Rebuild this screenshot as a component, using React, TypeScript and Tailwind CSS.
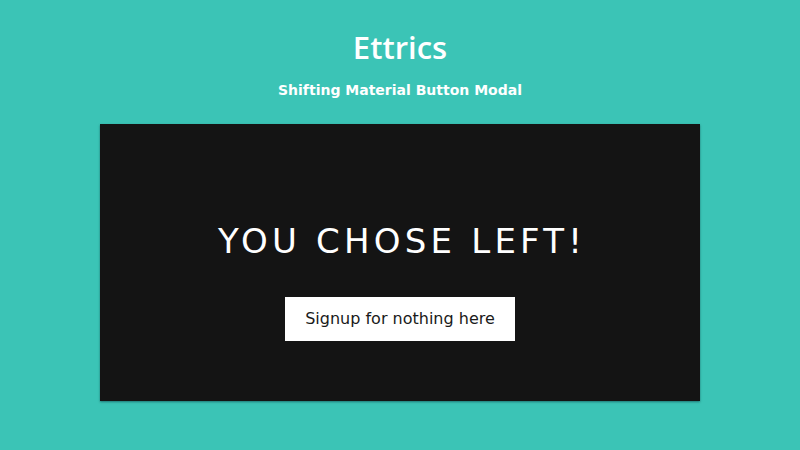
export default function App() {
  return (
    <div
      className="w-[800px] h-[450px] bg-[#3bc4b6] flex flex-col items-center pt-[28px] overflow-hidden"
      style={{ fontFamily: '"DejaVu Sans", "Open Sans", sans-serif' }}
    >
      <h1
        className="text-white text-[31px] leading-[38px] font-semibold"
        style={{ fontFamily: '"Open Sans", sans-serif' }}
      >
        Ettrics
      </h1>
      <p className="mt-[14px] text-white text-[14px] leading-[20px] font-bold">
        Shifting Material Button Modal
      </p>
      <div className="mt-[24px] w-[600px] h-[277px] bg-[#141414] shadow-[0_1px_2px_rgba(0,40,50,0.5)] flex flex-col items-center pt-[97px]">
        <h2 className="text-white text-[34px] leading-[40px] tracking-[4.2px] pl-[4px]">YOU CHOSE LEFT!</h2>
        <button className="mt-[36px] w-[230px] h-[44px] bg-white text-[#1a1a1a] text-[16px]">
          Signup for nothing here
        </button>
      </div>
    </div>
  )
}
